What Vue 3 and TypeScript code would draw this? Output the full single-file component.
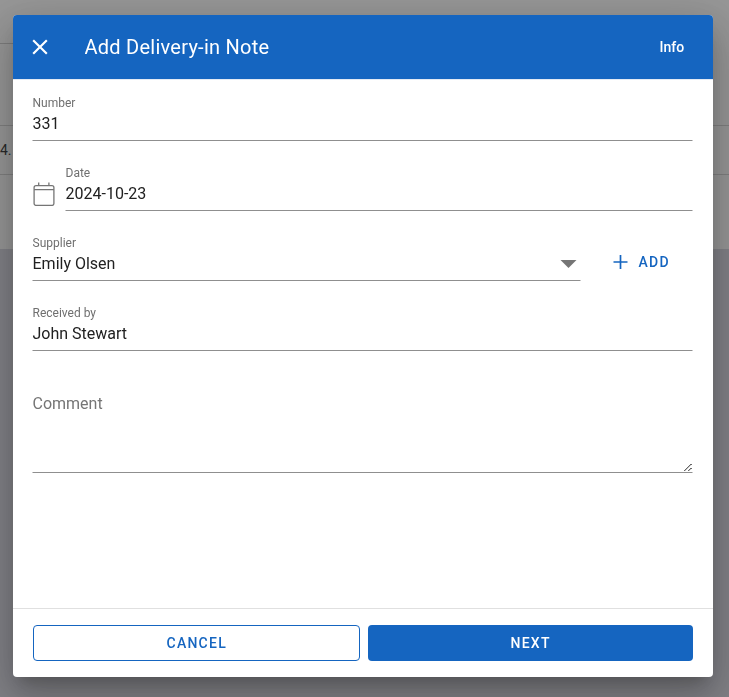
<script setup lang="ts">
import { ref } from 'vue'

const num = ref('331')
const date = ref('2024-10-23')
const supplier = ref('Emily Olsen')
const received = ref('John Stewart')
</script>

<template>
  <div class="page">
    <div class="backdrop">
      <div class="bg-line l1"></div>
      <div class="bg-row"><span class="bg-text">4.</span></div>
      <div class="bg-band"></div>
    </div>
    <div class="dialog">
      <header class="bar">
        <svg class="close" width="26" height="26" viewBox="0 0 24 24" fill="#fff">
          <path d="M19 6.41 17.59 5 12 10.59 6.41 5 5 6.41 10.59 12 5 17.59 6.41 19 12 13.41 17.59 19 19 17.59 13.41 12z" />
        </svg>
        <h1 class="title soft">Add Delivery-in Note</h1>
        <span class="info soft">Info</span>
      </header>
      <main class="body soft">
        <label class="field">
          <span class="lab">Number</span>
          <input class="inp" v-model="num" />
        </label>
        <div class="row date-row">
          <svg class="cal" width="24" height="24" viewBox="0 0 24 24" fill="none" stroke="#757575" stroke-width="1.3">
            <rect x="1.6" y="3.6" width="19.8" height="19.8" rx="2" />
            <path d="M1.6 7.6H21.4M6.2 .4v3.2M16.4 .4v3.2" />
          </svg>
          <label class="field grow">
            <span class="lab">Date</span>
            <input class="inp" v-model="date" />
          </label>
        </div>
        <div class="row supplier-row">
          <label class="field grow">
            <span class="lab">Supplier</span>
            <div class="inp select">
              <span>{{ supplier }}</span>
              <i class="arrow"></i>
            </div>
          </label>
          <button class="add" type="button">
            <svg width="20" height="20" viewBox="0 0 20 20" fill="none" stroke="#1565c0" stroke-width="1.7">
              <path d="M10 3v14M3 10h14" />
            </svg>
            <span>ADD</span>
          </button>
        </div>
        <label class="field received">
          <span class="lab">Received by</span>
          <input class="inp" v-model="received" />
        </label>
        <textarea class="comment" placeholder="Comment"></textarea>
      </main>
      <footer class="foot">
        <button class="btn outline" type="button"><span class="soft right">CANCEL</span></button>
        <button class="btn solid" type="button"><span class="soft right">NEXT</span></button>
      </footer>
    </div>
  </div>
</template>

<style>
html, body { margin: 0; padding: 0; }
</style>

<style scoped>
.page {
  position: relative;
  width: 729px;
  height: 697px;
  overflow: hidden;
  font-family: Roboto, sans-serif;
  display: flex;
  justify-content: flex-start;
  align-items: flex-start;
  box-sizing: border-box;
  padding: 15px 0 0 13px;
}
.backdrop {
  position: absolute;
  inset: 0;
  background: #979797;
}
.bg-line { position: absolute; left: 0; width: 13px; height: 1px; background: #7d7d7d; }
.l1 { top: 43px; }
.bg-row {
  position: absolute;
  left: 0;
  right: 0;
  top: 125px;
  height: 48px;
  border-top: 1px solid #808080;
  border-bottom: 1px solid #808080;
}
.bg-text { position: absolute; left: 0; top: 16px; font-size: 14px; color: #2a2a2a; }
.bg-band {
  position: absolute;
  left: 0;
  right: 0;
  top: 249px;
  bottom: 0;
  background: #828287;
}
.dialog {
  position: relative;
  width: 700px;
  height: 662px;
  background: #fff;
  border-radius: 4px;
  display: flex;
  flex-direction: column;
  overflow: hidden;
  box-shadow: 0 11px 15px -7px rgba(0,0,0,.2), 0 24px 38px 3px rgba(0,0,0,.14), 0 9px 46px 8px rgba(0,0,0,.12);
}
.soft {
  display: inline-block;
  will-change: transform;
  transform: translateX(-0.5px);
}
.soft.right { transform: translateX(0.5px); }
.bar {
  height: 65px;
  flex: none;
  background: #1565c0;
  border-bottom: 1px solid #e3eaf4;
  color: #fff;
  display: flex;
  align-items: center;
  padding: 0 28px 0 14px;
  box-sizing: border-box;
}
.close { flex: none; }
.title {
  flex: 1;
  margin: 0 0 0 32px;
  font-size: 20px;
  font-weight: 400;
  letter-spacing: .25px;
}
.info { font-size: 14px; font-weight: 500; letter-spacing: 0; }
.body {
  flex: 1;
  padding: 14px 20px 0;
  display: flex;
  flex-direction: column;
  min-height: 0;
}
.field { display: block; }
.grow { flex: 1; min-width: 0; }
.lab {
  display: block;
  height: 18px;
  line-height: 18px;
  font-size: 12px;
  color: #6f6f6f;
}
.inp {
  display: block;
  width: 100%;
  height: 29px;
  box-sizing: border-box;
  border: 0;
  border-bottom: 1px solid #8f8f8f;
  outline: 0;
  padding: 0 0 5px;
  background: none;
  font: 400 16px Roboto, sans-serif;
  color: #212121;
}
.row { display: flex; }
.date-row { margin-top: 23px; align-items: flex-end; }
.cal { flex: none; margin: 0 9px 5px 0; }
.supplier-row { margin-top: 23px; align-items: flex-start; }
.select {
  display: flex;
  align-items: center;
  justify-content: space-between;
  line-height: 23px;
}
.arrow {
  width: 0;
  height: 0;
  margin-right: 4px;
  border-left: 8px solid transparent;
  border-right: 8px solid transparent;
  border-top: 8px solid #757575;
}
.add {
  flex: none;
  width: 112px;
  height: 36px;
  margin-top: 10px;
  border: 0;
  background: none;
  padding: 0 0 0 30px;
  display: flex;
  align-items: center;
  gap: 8px;
  color: #1565c0;
  font: 500 14px Roboto, sans-serif;
  letter-spacing: 1.25px;
}
.received { margin-top: 23px; }
.comment {
  display: block;
  width: 100%;
  height: 86px;
  margin-top: 36px;
  box-sizing: border-box;
  border: 0;
  border-bottom: 1px solid #8f8f8f;
  outline: 0;
  padding: 7px 0 0;
  font: 400 16px Roboto, sans-serif;
  color: #212121;
  background: none;
}
.comment::placeholder { color: #757575; opacity: 1; }
.foot {
  flex: none;
  height: 69px;
  box-sizing: border-box;
  border-top: 1px solid #e0e0e0;
  padding: 16px 20px;
  display: flex;
  gap: 8px;
}
.btn {
  height: 36px;
  border-radius: 4px;
  box-sizing: border-box;
  font: 500 14px Roboto, sans-serif;
  letter-spacing: 1.25px;
  padding: 0;
}
.outline {
  width: 327px;
  background: #fff;
  color: #1565c0;
  border: 1px solid #1565c0;
}
.solid {
  flex: 1;
  background: #1565c0;
  color: #fff;
  border: 0;
}
</style>
